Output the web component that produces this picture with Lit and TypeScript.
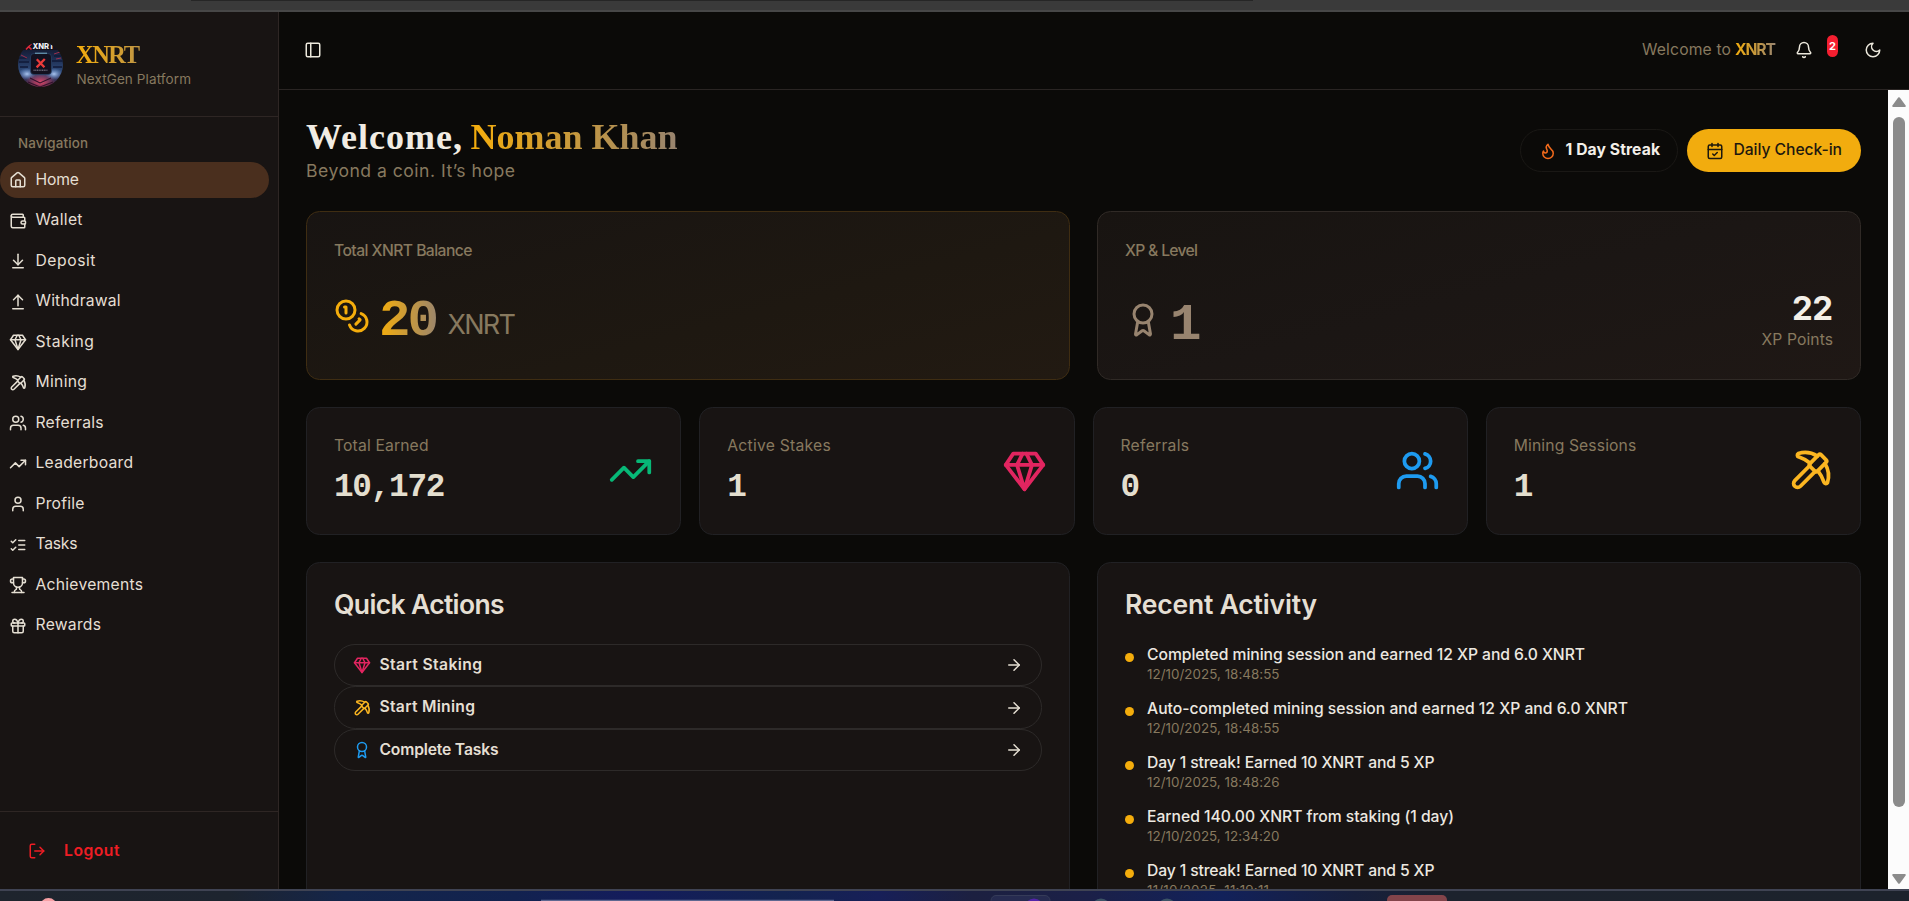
import { LitElement, html, css, svg } from "lit";
import { customElement } from "lit/decorators.js";

const ICONS: Record<string, unknown> = {
  panel: svg`<rect width="18" height="18" x="3" y="3" rx="2"/><path d="M9 3v18"/>`,
  home: svg`<path d="M15 21v-8a1 1 0 0 0-1-1h-4a1 1 0 0 0-1 1v8"/><path d="M3 10a2 2 0 0 1 .709-1.528l7-5.999a2 2 0 0 1 2.582 0l7 5.999A2 2 0 0 1 21 10v9a2 2 0 0 1-2 2H5a2 2 0 0 1-2-2z"/>`,
  wallet: svg`<path d="M19 7V4a1 1 0 0 0-1-1H5a2 2 0 0 0 0 4h15a1 1 0 0 1 1 1v4h-3a2 2 0 0 0 0 4h3a1 1 0 0 0 1-1v-2a1 1 0 0 0-1-1"/><path d="M3 5v14a2 2 0 0 0 2 2h15a1 1 0 0 0 1-1v-4"/>`,
  deposit: svg`<path d="M12 17V3"/><path d="m6 11 6 6 6-6"/><path d="M19 21H5"/>`,
  withdraw: svg`<path d="m18 9-6-6-6 6"/><path d="M12 3v14"/><path d="M5 21h14"/>`,
  gem: svg`<path d="M6 3h12l4 6-10 13L2 9Z"/><path d="M11 3 8 9l4 13 4-13-3-6"/><path d="M2 9h20"/>`,
  pickaxe: svg`<path d="M14.531 12.469 6.619 20.38a1 1 0 1 1-3-3l7.912-7.912"/><path d="M15.686 4.314A12.5 12.5 0 0 0 5.461 2.958 1 1 0 0 0 5.58 4.71a22 22 0 0 1 6.318 3.393"/><path d="M17.7 3.7a1 1 0 0 0-1.4 0l-4.6 4.6a1 1 0 0 0 0 1.4l2.6 2.6a1 1 0 0 0 1.4 0l4.6-4.6a1 1 0 0 0 0-1.4z"/><path d="M19.686 8.314a12.501 12.501 0 0 1 1.356 10.225 1 1 0 0 1-1.751-.119 22 22 0 0 0-3.393-6.319"/>`,
  users: svg`<path d="M16 21v-2a4 4 0 0 0-4-4H6a4 4 0 0 0-4 4v2"/><circle cx="9" cy="7" r="4"/><path d="M22 21v-2a4 4 0 0 0-3-3.87"/><path d="M16 3.13a4 4 0 0 1 0 7.75"/>`,
  trending: svg`<path d="M22 7 13.5 15.5 8.5 10.5 2 17"/><path d="M16 7h6v6"/>`,
  user: svg`<path d="M19 21v-2a4 4 0 0 0-4-4H9a4 4 0 0 0-4 4v2"/><circle cx="12" cy="7" r="4"/>`,
  tasks: svg`<path d="m3 17 2 2 4-4"/><path d="m3 7 2 2 4-4"/><path d="M13 6h8"/><path d="M13 12h8"/><path d="M13 18h8"/>`,
  trophy: svg`<path d="M6 9H4.5a2.5 2.5 0 0 1 0-5H6"/><path d="M18 9h1.5a2.5 2.5 0 0 0 0-5H18"/><path d="M4 22h16"/><path d="M10 14.66V17c0 .55-.47.98-.97 1.21C7.85 18.75 7 20.24 7 22"/><path d="M14 14.66V17c0 .55.47.98.97 1.21C16.15 18.75 17 20.24 17 22"/><path d="M18 2H6v7a6 6 0 0 0 12 0V2Z"/>`,
  gift: svg`<rect x="3" y="8" width="18" height="4" rx="1"/><path d="M12 8v13"/><path d="M19 12v7a2 2 0 0 1-2 2H7a2 2 0 0 1-2-2v-7"/><path d="M7.5 8a2.5 2.5 0 0 1 0-5A4.8 8 0 0 1 12 8a4.8 8 0 0 1 4.5-5 2.5 2.5 0 0 1 0 5"/>`,
  logout: svg`<path d="M9 21H5a2 2 0 0 1-2-2V5a2 2 0 0 1 2-2h4"/><path d="m16 17 5-5-5-5"/><path d="M21 12H9"/>`,
  bell: svg`<path d="M10.268 21a2 2 0 0 0 3.464 0"/><path d="M3.262 15.326A1 1 0 0 0 4 17h16a1 1 0 0 0 .74-1.673C19.41 13.956 18 12.499 18 8A6 6 0 0 0 6 8c0 4.499-1.411 5.956-2.738 7.326"/>`,
  moon: svg`<path d="M12 3a6 6 0 0 0 9 9 9 9 0 1 1-9-9Z"/>`,
  flame: svg`<path d="M8.5 14.5A2.5 2.5 0 0 0 11 12c0-1.38-.5-2-1-3-1.072-2.143-.224-4.054 2-6 .5 2.5 2 4.9 4 6.5 2 1.6 3 3.5 3 5.5a7 7 0 1 1-14 0c0-1.153.433-2.294 1-3a2.5 2.5 0 0 0 2.5 2.5z"/>`,
  calendar: svg`<path d="M8 2v4"/><path d="M16 2v4"/><rect width="18" height="18" x="3" y="4" rx="2"/><path d="M3 10h18"/><path d="m9 16 2 2 4-4"/>`,
  coins: svg`<circle cx="8" cy="8" r="6"/><path d="M18.09 10.37A6 6 0 1 1 10.34 18"/><path d="M7 6h1v4"/><path d="m16.71 13.88.7.71-2.82 2.82"/>`,
  award: svg`<path d="m15.477 12.89 1.515 8.526a.5.5 0 0 1-.81.47l-3.58-2.687a1 1 0 0 0-1.197 0l-3.586 2.686a.5.5 0 0 1-.81-.469l1.514-8.526"/><circle cx="12" cy="8" r="6"/>`,
  arrow: svg`<path d="M5 12h14"/><path d="m12 5 7 7-7 7"/>`,
};

const icon = (name: string, cls = "") => html`<svg class="ic ${cls}" viewBox="0 0 24 24">${ICONS[name]}</svg>`;

// A run of text tracked out or in so that it spans `w` pixels.
const t = (text: string, w: number, cls = "") =>
  html`<span class="t ${cls}" data-w=${w}>${text}</span>`;

const NAV: [string, string, number][] = [
  ["home", "Home", 43.5], ["wallet", "Wallet", 47], ["deposit", "Deposit", 60],
  ["withdraw", "Withdrawal", 85], ["gem", "Staking", 58.5], ["pickaxe", "Mining", 51.5],
  ["users", "Referrals", 68], ["trending", "Leaderboard", 97.5], ["user", "Profile", 49],
  ["tasks", "Tasks", 42], ["trophy", "Achievements", 107.5], ["gift", "Rewards", 65.5],
];

const STATS: [string, number, string, number, string, string][] = [
  ["Total Earned", 94.5, "10,172", 111.4, "trending", "green"],
  ["Active Stakes", 103.5, "1", 18.6, "gem", "pink"],
  ["Referrals", 68.5, "0", 18.6, "users", "blue"],
  ["Mining Sessions", 122.5, "1", 18.6, "pickaxe", "amber"],
];

const ACTIONS: [string, string, string, number][] = [
  ["gem", "pink", "Start Staking", 102.5],
  ["pickaxe", "amber", "Start Mining", 95.5],
  ["award", "blue", "Complete Tasks", 119],
];

const ACTIVITY: [string, number, string, number][] = [
  ["Completed mining session and earned 12 XP and 6.0 XNRT", 438, "12/10/2025, 18:48:55", 132.5],
  ["Auto-completed mining session and earned 12 XP and 6.0 XNRT", 481, "12/10/2025, 18:48:55", 132.5],
  ["Day 1 streak! Earned 10 XNRT and 5 XP", 287.5, "12/10/2025, 18:48:26", 132.5],
  ["Earned 140.00 XNRT from staking (1 day)", 307, "12/10/2025, 12:34:20", 132.5],
  ["Day 1 streak! Earned 10 XNRT and 5 XP", 287.5, "11/10/2025, 11:19:11", 122],
];

@customElement("app-root")
export class AppRoot extends LitElement {
  static styles = css`
    :host { display: flex; flex-direction: column; height: 901px; width: 1909px; overflow: hidden;
      background: #0b0a08; color: #e5dfd3; font: 400 15.7px/22px Inter, sans-serif; }
    * { box-sizing: border-box; }
    .t { display: inline-block; white-space: pre; flex: none; }
    .ic { width: 18px; height: 18px; flex: none; display: block; fill: none; stroke: currentColor;
      stroke-width: 2; stroke-linecap: round; stroke-linejoin: round; overflow: visible; }
    .grad { background: linear-gradient(90deg, #f4ad0c, #98846f); -webkit-background-clip: text;
      background-clip: text; color: transparent; }
    .muted { color: #87795f; }
    .green { color: #07b877; } .pink { color: #e22560; } .blue { color: #1e9bf0; } .amber { color: #fbb621; }

    .chrome { height: 12px; flex: none; background: #3a3a3a; border-bottom: 2px solid #474747; }
    .chrome i { display: block; height: 1px; margin-left: 191px; width: 1062px; background: #262626; }
    .shell { display: flex; height: 877px; flex: none; }

    .side { width: 279px; flex: none; background: #181413; border-right: 1px solid #2e2624;
      display: flex; flex-direction: column; }
    .brand { height: 105px; flex: none; display: flex; align-items: center; padding: 0 18px; gap: 13px;
      border-bottom: 1px solid #2e2624; }
    .logo { width: 45px; height: 45px; flex: none; display: block; }
    .brand-t { display: flex; flex-direction: column; }
    .brand-t b { font: 700 24.5px/32px "Liberation Serif", serif; height: 30px; }
    .brand-t small { font-size: 13.5px; line-height: 20px; height: 20px; padding-left: 0.5px; }
    .brandname { background-size: 114px 100%; }
    .label { font-size: 13.4px; font-weight: 500; line-height: 18px; padding: 17px 17px 10px 18px; height: 45px; flex: none; }
    .nav { display: flex; flex-direction: column; gap: 4.5px; width: 269px; }
    .nav a { display: flex; align-items: center; height: 36px; padding-left: 9px; gap: 8.5px; border-radius: 18px; }
    .nav a .t, .pill .t { margin-top: -1px; }
    .act .t { margin-top: -0.4px; }
    .nav a.on { background: #4a2f1e; }
    .logout { margin-top: auto; height: 78px; border-top: 1px solid #2e2624; display: flex; align-items: center;
      gap: 18px; padding-left: 28px; color: #ee1d24; font-weight: 600; }

    .main { flex: 1; min-width: 0; display: flex; flex-direction: column; }
    .top { height: 78px; flex: none; border-bottom: 1px solid #2a2523; display: flex; align-items: center;
      padding: 0 27px 2px 25px; color: #ece8dc; }
    .top .welcome { margin-left: auto; display: flex; margin-top: 1px; gap: 4px; font-weight: 400; }
    .top .welcome b { font-weight: 700; }
    .top .bell { margin-left: 19px; }
    .badge { width: 11px; height: 22px; border-radius: 5.5px; background: #f51f30; color: #fff; font-size: 11px;
      font-weight: 700; line-height: 22px; text-align: center; margin: -7px 26px 0 14px; }

    .body { flex: 1; min-height: 0; display: flex; }
    .content { flex: 1; min-width: 0; padding: 27px; overflow: hidden; display: flex; flex-direction: column; gap: 27px; }
    .bar { width: 21px; flex: none; background: #fcfcfc; display: flex; flex-direction: column; align-items: center;
      padding: 7px 0 5px; }
    .bar svg { width: 14px; height: 10px; fill: #8b8b8b; stroke: #8b8b8b; stroke-width: 2; stroke-linejoin: round; display: block; }
    .thumb { width: 12px; height: 690px; border-radius: 6px; background: #8b8b8b; margin: 10px 0 67px; }

    .hero { height: 67px; flex: none; display: flex; align-items: center; justify-content: space-between; }
    .h1 { font: 700 36px/40px "Liberation Serif", serif; height: 40px; color: #f1ece3; display: flex; gap: 8.5px; }
    .sub { font-size: 17.6px; line-height: 27px; height: 27px; }
    .pills { display: flex; gap: 9px; }
    .pill { height: 43px; border-radius: 21.5px; display: flex; align-items: center; }
    .pill.streak { width: 158px; border: 1px solid #1a1815; padding-left: 18px; gap: 8.5px; color: #f3efe8; font-weight: 700; }
    .pill.daily { width: 174px; background: #f2ac0e; color: #1d180e; padding-left: 19px; gap: 9.5px; font-weight: 500; }
    .flame { color: #f26a1b; }

    .two { display: grid; grid-template-columns: 1fr 1fr; gap: 27px; flex: none; }
    .card { border-radius: 13.5px; border: 1px solid #212124; background: #181413; }
    .big { height: 169px; padding: 27px; display: flex; flex-direction: column; justify-content: space-between; }
    .big .cap { font-weight: 500; line-height: 23px; height: 22px; }
    .bal { border-color: #3f2d12; background: linear-gradient(165deg, #181412 0%, #1e1811 60%, #221a12 100%); }
    .xp { border-color: #302a26; background: linear-gradient(165deg, #181411 0%, #1b1614 50%, #1f1815 100%); }
    .row { display: flex; align-items: flex-end; height: 64px; }
    .i36 { width: 36px; height: 36px; }
    .gold { color: #f4ad0c; }
    .num { font: 700 52.5px/54px "Liberation Mono", monospace; height: 54px; }
    .unit { font-size: 27px; line-height: 32px; height: 32px; }
    .row .i36 { margin-bottom: 18px; }
    .row .num { margin-left: 9px; margin-bottom: 4px; }
    .row .unit { margin-left: 8.5px; margin-bottom: 11px; }
    .xp .i36 { margin-bottom: 14px; }
    .xp .num { margin-bottom: 0; }
    .tan { color: #98846f; }
    .pts { margin-left: auto; display: flex; flex-direction: column; align-items: flex-end; }
    .pts b { font-size: 33px; font-weight: 700; line-height: 38px; height: 38px; color: #f3efe8; }
    .pts small { font-size: 15.7px; line-height: 25px; height: 25px; }

    .four { display: grid; grid-template-columns: repeat(4, 1fr); gap: 18px; flex: none; }
    .stat { height: 128px; padding: 0 27px 2px; display: flex; align-items: center; justify-content: space-between; }
    .stat div { display: flex; flex-direction: column; gap: 13px; margin-top: 1px; }
    .stat b { font: 700 32.7px/36px "Liberation Mono", monospace; height: 36px; color: #e3dece; }
    .i45 { width: 45px; height: 45px; }

    .panel { height: 420px; padding: 26px 27px; }
    .panel h2 { font-size: 26.5px; font-weight: 600; line-height: 30px; height: 30px; margin: 0; display: flex; }
    .acts { margin-top: 25px; display: flex; flex-direction: column; }
    .act { height: 42.4px; border: 1px solid #2d2a29; border-radius: 21.2px; display: flex; align-items: center;
      padding: 0 18px; gap: 8.5px; font-weight: 600; }
    .act .go { margin-left: auto; }
    .log { margin-top: 24px; display: flex; flex-direction: column; }
    .log .item { display: flex; height: 54px; gap: 13px; }
    .dot { width: 9px; height: 9px; border-radius: 50%; background: #f4ad0c; flex: none; margin-top: 10px; }
    .log p { margin: 1px 0 0; display: flex; flex-direction: column; }
    .log p b { font-weight: 450; color: #ece8e0; line-height: 22px; height: 22px; }
    .log p small { font-size: 13.4px; line-height: 17px; height: 17px; }

    .task { height: 12px; flex: none; border-top: 2px solid #3f4353; overflow: hidden; display: flex;
      background: linear-gradient(90deg, #1e242d 0, #1d242f 12%, #14254a 18%, #12224f 27%, #141c5c 33%, #13234f 41%, #171f58 46%, #1c2040 51%, #1b2048 57%, #12215a 64%, #171f3c 71%, #1c222d 76%, #1c222c 100%); }
    .task svg { width: 1909px; height: 10px; display: block; }
  `;

  firstUpdated() {
    this.renderRoot.querySelectorAll<HTMLElement>(".t").forEach((el) => {
      const want = Number(el.dataset.w);
      const n = Math.max(1, (el.textContent ?? "").length - 1);
      const have = el.getBoundingClientRect().width;
      if ((el.textContent ?? "").length > 1) el.style.letterSpacing = `${(want - have) / n}px`;
      el.style.width = `${want}px`;
    });
  }

  logo() {
    return html`<svg class="logo" viewBox="0 0 45 45">
      <defs>
        <clipPath id="c"><circle cx="22.5" cy="22.5" r="22.5"/></clipPath>
        <linearGradient id="g" x1="0" y1="0" x2="0" y2="1">
          <stop offset="0" stop-color="#11101c"/><stop offset=".3" stop-color="#1a2748"/>
          <stop offset=".65" stop-color="#2e4a78"/><stop offset="1" stop-color="#3a1a35"/>
        </linearGradient>
        <radialGradient id="r"><stop offset="0" stop-color="#d8486a"/><stop offset="1" stop-color="#d8486a" stop-opacity="0"/></radialGradient>
        <radialGradient id="b"><stop offset="0" stop-color="#a9c4ee"/><stop offset="1" stop-color="#6c96d8" stop-opacity="0"/></radialGradient>
      </defs>
      <g clip-path="url(#c)">
        <rect width="45" height="45" fill="url(#g)"/>
        <path d="M0 16h9M1 20h10M2 25h8M36 14h8M34 19h11M35 25h9" stroke="#111a38" stroke-width="1.6"/>
        <path d="M3 13l6 3M36 12l6-2M38 17l5-1" stroke="#a8324e" stroke-width=".9"/>
        <ellipse cx="9" cy="32" rx="9" ry="6" fill="url(#b)"/><ellipse cx="36" cy="32" rx="9" ry="6" fill="url(#b)"/>
        <ellipse cx="22.5" cy="40" rx="15" ry="9" fill="url(#r)"/>
        <path d="M12 36l10 5 11-5M10 40l12 5 13-5" fill="none" stroke="#30122c" stroke-width="1.1"/>
        <rect x="12.5" y="11.5" width="21" height="21" rx="3.5" fill="#12101f" stroke="#2c4a70" stroke-width=".6"/>
        <path d="M17 11.2h12" stroke="#8fd0e8" stroke-width=".8"/>
        <path d="M18.8 17.2l7.6 8M26.8 17l-8.2 8.4" stroke="#ea3b3a" stroke-width="2.3"/>
        <path d="M15.5 28.2h14" stroke="#8a8796" stroke-width="1" stroke-dasharray="1.2 .5"/>
        <rect width="45" height="8" fill="#15111b"/>
        <path d="M8 7.5l5.5-6M10.5 4.5l3 3" stroke="#d92a37" stroke-width="1.7"/>
        <text x="14.5" y="7" font-family="Inter, sans-serif" font-size="7.6" font-weight="800" fill="#f2f2f4">XNRT</text>
      </g>
    </svg>`;
  }

  render() {
    return html`
      <div class="chrome"><i></i></div>
      <div class="shell">
        <aside class="side">
          <div class="brand">
            ${this.logo()}
            <div class="brand-t"><b>${t("XNRT", 64, "grad brandname")}</b><small class="muted">${t("NextGen Platform", 114.5)}</small></div>
          </div>
          <div class="label muted">${t("Navigation", 70)}</div>
          <nav class="nav">
            ${NAV.map(([i, l, w], k) => html`<a class=${k === 0 ? "on" : ""}>${icon(i)}${t(l, w)}</a>`)}
          </nav>
          <div class="logout">${icon("logout")}${t("Logout", 55.5)}</div>
        </aside>
        <div class="main">
          <header class="top">
            ${icon("panel")}
            <div class="welcome"><span class="muted">${t("Welcome to", 89)}</span><b>${t("XNRT", 41, "grad")}</b></div>
            ${icon("bell", "bell")}
            <div class="badge">2</div>
            ${icon("moon")}
          </header>
          <div class="body">
            <div class="content">
              <section class="hero">
                <div>
                  <div class="h1">${t("Welcome,", 156)}${t("Noman Khan", 207, "grad")}</div>
                  <div class="sub muted">${t("Beyond a coin. It’s hope", 209)}</div>
                </div>
                <div class="pills">
                  <div class="pill streak">${icon("flame", "flame")}${t("1 Day Streak", 94.5)}</div>
                  <div class="pill daily">${icon("calendar")}${t("Daily Check-in", 108.5)}</div>
                </div>
              </section>
              <section class="two">
                <div class="card big bal">
                  <div class="cap muted">${t("Total XNRT Balance", 138.5)}</div>
                  <div class="row">${icon("coins", "i36 gold")}${t("20", 60, "num grad")}${t("XNRT", 68.5, "unit muted")}</div>
                </div>
                <div class="card big xp">
                  <div class="cap muted">${t("XP & Level", 73)}</div>
                  <div class="row">${icon("award", "i36 tan")}${t("1", 30, "num tan")}
                    <div class="pts"><b>${t("22", 41)}</b><small class="muted">${t("XP Points", 71.5)}</small></div>
                  </div>
                </div>
              </section>
              <section class="four">
                ${STATS.map(([l, w, v, vw, i, c]) => html`<div class="card stat">
                  <div><span class="muted">${t(l, w)}</span><b>${t(v, vw)}</b></div>${icon(i, `i45 ${c}`)}
                </div>`)}
              </section>
              <section class="two">
                <div class="card panel">
                  <h2>${t("Quick Actions", 170.5)}</h2>
                  <div class="acts">
                    ${ACTIONS.map(([i, c, l, w]) => html`<div class="act">${icon(i, c)}${t(l, w)}${icon("arrow", "go")}</div>`)}
                  </div>
                </div>
                <div class="card panel">
                  <h2>${t("Recent Activity", 192)}</h2>
                  <div class="log">
                    ${ACTIVITY.map(([l, w, d, dw]) => html`<div class="item"><i class="dot"></i>
                      <p><b>${t(l, w)}</b><small class="muted">${t(d, dw)}</small></p></div>`)}
                  </div>
                </div>
              </section>
            </div>
            <div class="bar">
              <svg viewBox="0 0 14 10"><path d="M7 1.2 12.8 9H1.2z"/></svg>
              <div class="thumb"></div>
              <svg viewBox="0 0 14 10"><path d="M7 8.8 12.8 1H1.2z"/></svg>
            </div>
          </div>
        </div>
      </div>
      <div class="task">
        <svg viewBox="0 0 1909 10">
          <circle cx="48.5" cy="15.5" r="8.5" fill="#f7a0a4"/>
          <path d="M541 9.5h293" stroke="#5d6790" stroke-width="1.4"/>
          <rect x="991" y="4.5" width="59" height="20" rx="5" fill="#262b50" stroke="#353b58"/>
          <circle cx="1034" cy="17" r="9.5" fill="#5225a8"/>
          <circle cx="1101" cy="17" r="9.5" fill="#3c5366"/><circle cx="1167" cy="17" r="9.5" fill="#3c5366"/>
          <rect x="1387" y="4" width="60" height="20" rx="5" fill="#83444a"/>
        </svg>
      </div>
    `;
  }
}
